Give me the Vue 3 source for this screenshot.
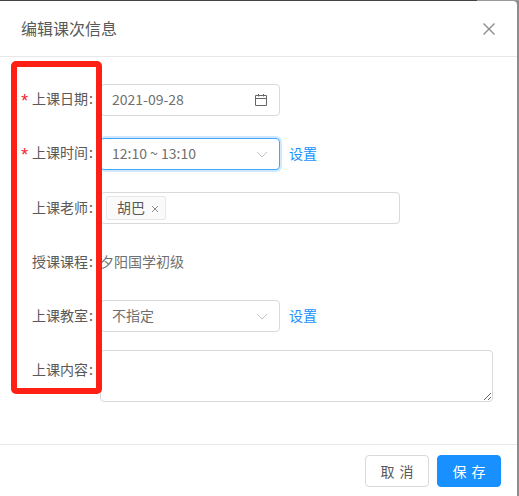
<template>
  <div class="screen">
    <div class="dialog">
      <header class="dialog-head">
        <span class="dialog-title">编辑课次信息</span>
        <svg class="close-icon" width="12" height="12" viewBox="0 0 12 12" aria-hidden="true">
          <path d="M0.5 0.5 L11.5 11.5 M11.5 0.5 L0.5 11.5" stroke="#8c8c8c" stroke-width="1.4" fill="none" />
        </svg>
      </header>

      <div class="dialog-body">
        <div class="form-row">
          <label class="form-label"><i class="req">*</i>上课日期<span class="colon">:</span></label>
          <div class="input date-input">
            <span class="value">2021-09-28</span>
            <svg width="14" height="14" viewBox="0 0 14 14" aria-hidden="true">
              <path d="M1.5 2.5 H12.5 V12.5 H1.5 Z M1.5 5.5 H12.5 M4.5 1 V3.5 M9.5 1 V3.5" stroke="#666" fill="none" />
            </svg>
          </div>
        </div>

        <div class="form-row">
          <label class="form-label"><i class="req">*</i>上课时间<span class="colon">:</span></label>
          <div class="input select-input focused">
            <span class="value">12:10 ~ 13:10</span>
            <svg width="12" height="7" viewBox="0 0 12 7" aria-hidden="true">
              <path d="M1 1 L6 6 L11 1" stroke="#c4c4c4" fill="none" />
            </svg>
          </div>
          <a class="link">设置</a>
        </div>

        <div class="form-row">
          <label class="form-label">上课老师<span class="colon">:</span></label>
          <div class="input tag-input">
            <span class="tag"><span class="tag-text">胡巴</span>
              <svg class="tag-x" width="8" height="8" viewBox="0 0 8 8" aria-hidden="true">
                <path d="M1 1 L7 7 M7 1 L1 7" stroke="#8c8c8c" fill="none" />
              </svg>
            </span>
          </div>
        </div>

        <div class="form-row">
          <label class="form-label">授课课程<span class="colon">:</span></label>
          <span class="plain-value">夕阳国学初级</span>
        </div>

        <div class="form-row">
          <label class="form-label">上课教室<span class="colon">:</span></label>
          <div class="input select-input">
            <span class="value">不指定</span>
            <svg width="12" height="7" viewBox="0 0 12 7" aria-hidden="true">
              <path d="M1 1 L6 6 L11 1" stroke="#c4c4c4" fill="none" />
            </svg>
          </div>
          <a class="link">设置</a>
        </div>

        <div class="form-row area-row">
          <label class="form-label">上课内容<span class="colon">:</span></label>
          <textarea class="textarea"></textarea>
        </div>

        <div class="highlight"></div>
      </div>

      <footer class="dialog-foot">
        <button class="btn">取 消</button>
        <button class="btn btn-primary">保 存</button>
      </footer>
    </div>
  </div>
</template>

<script setup>
</script>

<style>
html,
body {
  margin: 0;
  overflow: hidden;
}
</style>

<style scoped>
.screen {
  width: 519px;
  height: 496px;
  background: linear-gradient(to right, #444 477px, #999 477px) top left / 100% 1px no-repeat, #8c8c8c;
  padding: 1px 2px 0 0;
  box-sizing: border-box;
  font-family: "Noto Sans CJK SC", "Liberation Sans", sans-serif;
  font-size: 14px;
  line-height: 20px;
  color: #595959;
}

.dialog {
  height: 100%;
  background: #fff;
  border-radius: 0 4px 0 0;
  display: flex;
  flex-direction: column;
}

.dialog-head {
  height: 55px;
  flex: none;
  display: flex;
  align-items: center;
  justify-content: space-between;
  padding: 0 22px 0 21px;
  border-bottom: 1px solid #e8e8e8;
  margin-bottom: -1px;
}

.dialog-title {
  font-size: 16px;
  margin-top: -1px;
}

.dialog-body {
  position: relative;
  flex: 1;
  padding-top: 28px;
}

.form-row {
  display: flex;
  align-items: center;
  height: 32px;
  margin-bottom: 22px;
}

.area-row {
  align-items: flex-start;
  height: 52px;
  margin-bottom: 0;
  margin-top: -4px;
}

.area-row .form-label {
  line-height: 38px;
  margin-bottom: 0;
}

.form-label {
  width: 93px;
  flex: none;
  text-align: right;
  margin-right: 7px;
  margin-bottom: 2px;
  white-space: nowrap;
}

.colon {
  margin-left: 1px;
}

.req {
  color: #f5222d;
  font-style: normal;
  font-family: "Liberation Mono", monospace;
  font-size: 18px;
  line-height: 1;
  vertical-align: -3px;
  margin-right: 2px;
}

.input {
  height: 32px;
  box-sizing: border-box;
  border: 1px solid #d9d9d9;
  border-radius: 4px;
  display: flex;
  align-items: center;
  background: #fff;
}

.date-input,
.select-input {
  width: 180px;
  justify-content: space-between;
  padding: 0 11px;
}

.focused {
  border-color: #40a9ff;
  box-shadow: 0 0 0 2px rgba(24, 144, 255, 0.2);
}

.value,
.plain-value,
.tag-text {
  margin-bottom: 2px;
}

.value,
.plain-value {
  color: #707070;
}

.link {
  margin-left: 9px;
  margin-bottom: 2px;
  color: #1890ff;
}

.tag-input {
  width: 300px;
  padding: 0 5px;
}

.tag {
  height: 24px;
  box-sizing: border-box;
  border: 1px solid #e8e8e8;
  border-radius: 2px;
  background: #fafafa;
  padding: 0 6px 0 10px;
  display: flex;
  align-items: center;
  gap: 6px;
}

.tag-x {
  margin-top: 1px;
}

.textarea {
  width: 393px;
  height: 52px;
  box-sizing: border-box;
  border: 1px solid #d9d9d9;
  border-radius: 4px;
  padding: 4px 11px;
  margin: 0;
  outline: none;
  display: block;
}

.highlight {
  position: absolute;
  left: 11px;
  top: 5px;
  width: 91px;
  height: 333px;
  box-sizing: border-box;
  border: 6px solid #ff2015;
  border-radius: 5px;
  pointer-events: none;
}

.dialog-foot {
  height: 52px;
  flex: none;
  box-sizing: border-box;
  border-top: 1px solid #e8e8e8;
  display: flex;
  align-items: center;
  justify-content: flex-end;
  gap: 8px;
  padding: 0 16px 0 0;
}

.btn {
  width: 64px;
  height: 32px;
  border: 1px solid #d9d9d9;
  border-radius: 4px;
  background: #fff;
  color: #595959;
  font: inherit;
  word-spacing: 2px;
  padding: 0;
}

.btn-primary {
  background: #1890ff;
  border-color: #1890ff;
  color: #fff;
}
</style>
